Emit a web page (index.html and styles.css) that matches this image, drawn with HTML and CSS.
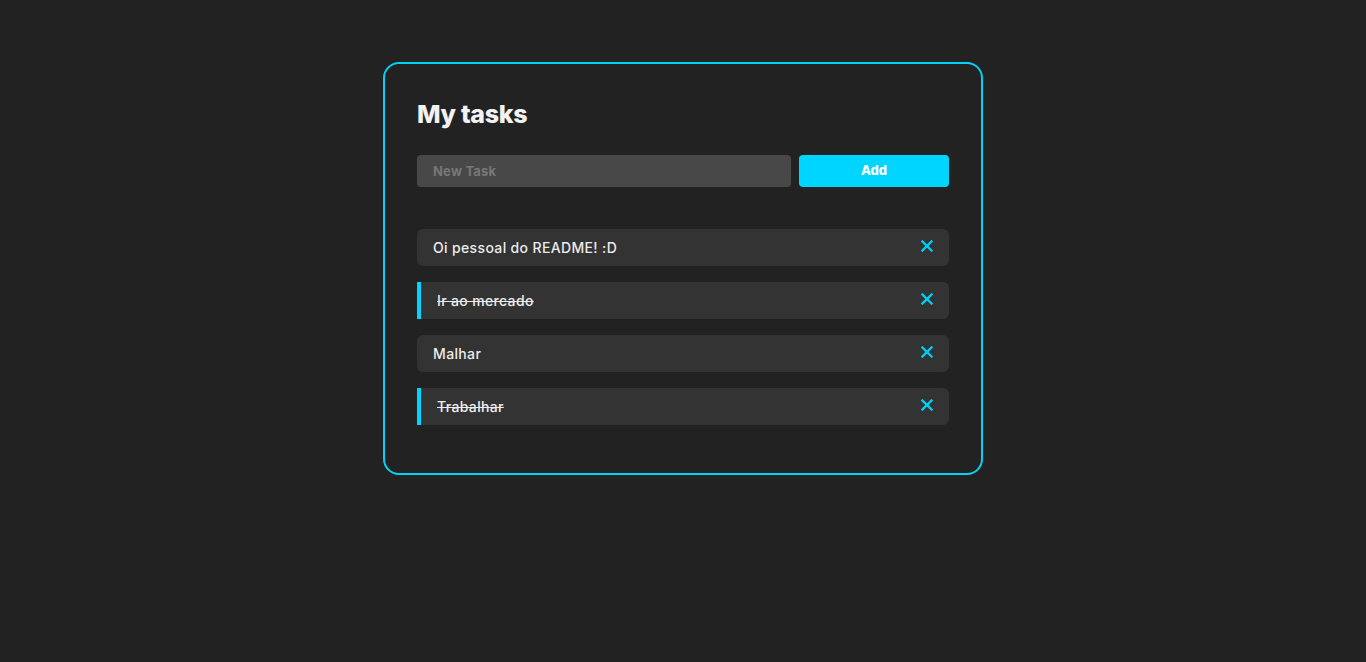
FILE: index.html
```html
<!DOCTYPE html>
<html lang="pt">
<head>
<meta charset="utf-8">
<title>My tasks</title>
<link rel="stylesheet" href="styles.css">
</head>
<body>
<main class="card">
  <h1 class="title">My tasks</h1>
  <form class="new-task">
    <input class="new-task-input" type="text" placeholder="New Task">
    <button class="add-btn" type="button">Add</button>
  </form>
  <ul class="task-list">
    <li class="task"><span class="task-text">Oi pessoal do README! :D</span><button class="remove" type="button" aria-label="Remover"><svg viewBox="0 0 12 12" width="12" height="12"><path d="M1.5 1.5 L10.5 10.5 M10.5 1.5 L1.5 10.5" stroke="currentColor" stroke-width="2.3" stroke-linecap="square"/></svg></button></li>
    <li class="task done"><span class="task-text">Ir ao mercado</span><button class="remove" type="button" aria-label="Remover"><svg viewBox="0 0 12 12" width="12" height="12"><path d="M1.5 1.5 L10.5 10.5 M10.5 1.5 L1.5 10.5" stroke="currentColor" stroke-width="2.3" stroke-linecap="square"/></svg></button></li>
    <li class="task"><span class="task-text">Malhar</span><button class="remove" type="button" aria-label="Remover"><svg viewBox="0 0 12 12" width="12" height="12"><path d="M1.5 1.5 L10.5 10.5 M10.5 1.5 L1.5 10.5" stroke="currentColor" stroke-width="2.3" stroke-linecap="square"/></svg></button></li>
    <li class="task done"><span class="task-text">Trabalhar</span><button class="remove" type="button" aria-label="Remover"><svg viewBox="0 0 12 12" width="12" height="12"><path d="M1.5 1.5 L10.5 10.5 M10.5 1.5 L1.5 10.5" stroke="currentColor" stroke-width="2.3" stroke-linecap="square"/></svg></button></li>
  </ul>
</main>
</body>
</html>
```
FILE: styles.css
```css
* { box-sizing: border-box; }
html, body { margin: 0; padding: 0; }
body {
  background: #222222;
  font-family: "Inter", "Noto Sans", "Liberation Sans", sans-serif;
  color: #e8e8e8;
  min-height: 662px;
  padding-top: 62px;
}
.card {
  width: 600px;
  margin: 0 auto;
  border: 2px solid #00d3f7;
  border-radius: 16px;
  padding: 32px 32px 48px;
}
.title {
  margin: 0;
  font-size: 25px;
  line-height: 36px;
  font-weight: 800;
  color: #f2f2f2;
  letter-spacing: -0.3px;
}
.new-task {
  display: flex;
  gap: 8px;
  margin-top: 23px;
}
.new-task-input {
  flex: 1;
  height: 32px;
  border: none;
  border-radius: 4px;
  background: #484848;
  padding: 0 16px;
  font-family: inherit;
  font-size: 13px;
  font-weight: 700;
  letter-spacing: 0.2px;
  color: #e8e8e8;
  outline: none;
}
.new-task-input::placeholder { color: #777777; }
.add-btn {
  width: 150px;
  height: 32px;
  border: none;
  border-radius: 4px;
  background: #00d5ff;
  color: #ffffff;
  font-family: inherit;
  font-size: 13px;
  font-weight: 800;
  padding: 0 0 2px;
}
.task-list {
  list-style: none;
  margin: 42px 0 0;
  padding: 0;
  display: flex;
  flex-direction: column;
  gap: 16px;
}
.task {
  height: 37px;
  display: flex;
  align-items: center;
  justify-content: space-between;
  background: #333333;
  border-radius: 6px;
  padding: 0 15px 0 16px;
}
.task.done {
  border-left: 4px solid #00d5ff;
  border-radius: 0 6px 6px 0;
}
.task-text {
  font-size: 14px;
  font-weight: 500;
  letter-spacing: 0.35px;
  color: #ececec;
  margin-top: -1px;
}
.task.done .task-text { text-decoration: line-through; }
.remove {
  background: none;
  border: none;
  padding: 0;
  color: #00cff5;
  width: 14px;
  height: 14px;
  margin-top: -3px;
  display: flex;
  align-items: center;
  justify-content: center;
}
```
